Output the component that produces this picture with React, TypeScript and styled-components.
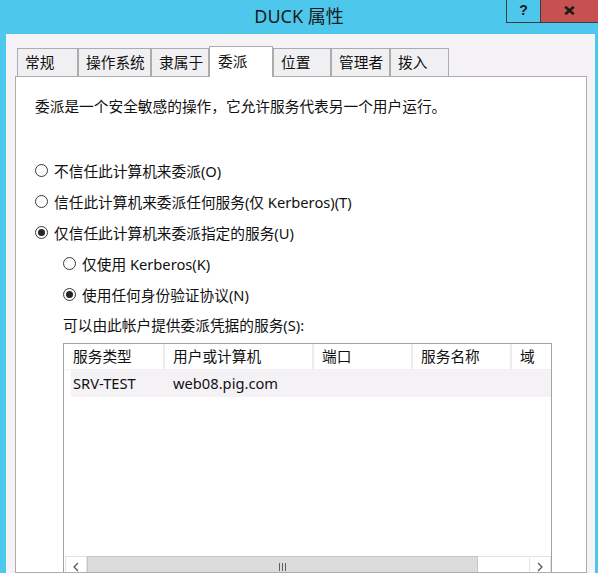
import React from "react";
import styled, { createGlobalStyle } from "styled-components";

const GlobalStyle = createGlobalStyle`
  html, body {
    margin: 0;
    padding: 0;
    overflow: hidden;
    background: #4dc7ec;
  }
  body {
    font-family: "Noto Sans", "Noto Sans CJK SC", sans-serif;
    color: #111;
  }
  * { box-sizing: border-box; }
`;

const Frame = styled.div`
  width: 598px;
  height: 573px;
  overflow: hidden;
  background: #4dc7ec;
  display: flex;
  flex-direction: column;
`;

const TitleBar = styled.div`
  height: 34px;
  flex: none;
  display: grid;
  grid-template-columns: 1fr auto 1fr;
  align-items: center;
`;

const TitleText = styled.div`
  grid-column: 2;
  font-size: 18px;
  line-height: 22px;
  color: #1b1b1b;
  padding-bottom: 2px;
  white-space: nowrap;
`;

const CaptionButtons = styled.div`
  grid-column: 3;
  justify-self: end;
  align-self: start;
  display: flex;
  height: 23px;
  border-left: 1px solid #3d3d3d;
  border-bottom: 1px solid #3d3d3d;
`;

const CaptionButton = styled.div<{ $variant: "help" | "close" }>`
  width: ${(p) => (p.$variant === "help" ? 34 : 57)}px;
  height: 100%;
  display: grid;
  place-items: center;
  background: ${(p) => (p.$variant === "help" ? "#4dc7ec" : "#c75050")};
  border-right: ${(p) => (p.$variant === "help" ? "1px solid #3d3d3d" : "none")};
  font-family: "Liberation Sans", sans-serif;
  font-weight: 700;
  font-size: 14px;
  color: #1a1a1a;
  padding-bottom: 2px;
`;

const Client = styled.div`
  flex: 1;
  min-height: 0;
  margin: 0 3px 0 6px;
  background: #f5f3f7;
  padding: 12px 8px 0 9px;
  display: flex;
  flex-direction: column;
`;

const TabStrip = styled.div`
  height: 30px;
  flex: none;
  display: flex;
  align-items: flex-end;
  padding-left: 2px;
  position: relative;
  z-index: 1;
`;

const Tab = styled.div<{ $active?: boolean; $w: number }>`
  width: ${(p) => p.$w}px;
  height: ${(p) => (p.$active ? 31 : 28)}px;
  margin-bottom: ${(p) => (p.$active ? -1 : 0)}px;
  border: 1px solid #acacac;
  border-bottom: none;
  background: ${(p) => (p.$active ? "#ffffff" : "#f0eff2")};
  padding-left: ${(p) => (p.$active ? 8 : 7)}px;
  font-size: 14.7px;
  line-height: ${(p) => (p.$active ? 28 : 26)}px;
  white-space: nowrap;
  color: #111;
`;

const Panel = styled.div`
  flex: 1;
  min-height: 0;
  background: #ffffff;
  border: 1px solid #acacac;
  padding: 19px 0 0 19px;
  display: flex;
  flex-direction: column;
  overflow: hidden;
`;

const Intro = styled.div`
  font-size: 14.7px;
  line-height: 20px;
  height: 20px;
  white-space: nowrap;
`;

const OptionList = styled.div`
  margin-top: 39px;
  display: flex;
  flex-direction: column;
`;

const OptionRow = styled.div<{ $indent?: boolean }>`
  height: 31px;
  display: flex;
  align-items: center;
  gap: 6px;
  padding-left: ${(p) => (p.$indent ? 28 : 0)}px;
  font-size: 14.7px;
  white-space: nowrap;
`;

const RadioCircle = styled.span<{ $checked?: boolean }>`
  width: 13px;
  height: 13px;
  flex: none;
  border-radius: 50%;
  border: 1px solid #3a3a3a;
  background: #fdfdfd;
  display: grid;
  place-items: center;
  &::after {
    content: "";
    width: 7px;
    height: 7px;
    border-radius: 50%;
    background: ${(p) => (p.$checked ? "#262626" : "transparent")};
  }
`;

const ListCaption = styled.div`
  height: 31px;
  line-height: 31px;
  padding-left: 28px;
  font-size: 14.7px;
  white-space: nowrap;
`;

const ListBox = styled.div`
  margin: 2px 0 0 28px;
  width: 489px;
  height: 235px;
  flex: none;
  border: 1px solid #a2a2a2;
  background: #ffffff;
  display: flex;
  flex-direction: column;
`;

const HeaderRow = styled.div`
  height: 26px;
  flex: none;
  display: flex;
  border-bottom: 1px solid #f1f1f1;
`;

const HeaderCell = styled.div<{ $w?: number }>`
  ${(p) => (p.$w ? `width: ${p.$w}px; flex: none; border-right: 2px solid #ececec;` : "flex: 1;")}
  padding-left: 8px;
  font-size: 14.7px;
  line-height: 25px;
  white-space: nowrap;
  overflow: hidden;
  &:first-child { padding-left: 9px; }
`;

const DataRow = styled.div`
  height: 27px;
  flex: none;
  margin-left: 7px;
  background: #f5f2f6;
  display: flex;
`;

const DataCell = styled.div<{ $w?: number; $pad: number }>`
  ${(p) => (p.$w ? `width: ${p.$w}px; flex: none;` : "flex: 1;")}
  padding-left: ${(p) => p.$pad}px;
  font-size: 14.7px;
  line-height: 27px;
  white-space: nowrap;
`;

const Filler = styled.div`
  flex: 1;
`;

const ScrollBar = styled.div`
  height: 21px;
  flex: none;
  display: flex;
  padding-left: 1px;
  background: #ffffff;
`;

const ScrollArrow = styled.div`
  width: 22px;
  flex: none;
  display: grid;
  place-items: center;
  border: 1px solid #e4e4e4;
  border-bottom: none;
  background: #ffffff;
`;

const Thumb = styled.div`
  width: 391px;
  flex: none;
  background: #dcdcdc;
  border: 1px solid #c6c6c6;
  border-bottom: none;
  display: flex;
  justify-content: center;
  align-items: center;
  gap: 2px;
`;

const GripLine = styled.span`
  width: 1px;
  height: 8px;
  background: #5e5e5e;
`;

const Track = styled.div`
  flex: 1;
  border-top: 1px solid #e4e4e4;
`;

const Chevron = ({ dir }: { dir: "left" | "right" }) => (
  <svg width="6" height="10" viewBox="0 0 6 10">
    <polyline
      points={dir === "left" ? "5,1 1,5 5,9" : "1,1 5,5 1,9"}
      fill="none"
      stroke="#5a5a5a"
      strokeWidth="1.3"
    />
  </svg>
);

const CloseGlyph = () => (
  <svg width="11" height="9" viewBox="0 0 11 9">
    <path d="M1.2 0.8 L9.8 8.2 M9.8 0.8 L1.2 8.2" stroke="#1a1a1a" strokeWidth="2.6" strokeLinecap="butt" />
  </svg>
);

const tabs: { label: string; w: number; active?: boolean }[] = [
  { label: "常规", w: 61 },
  { label: "操作系统", w: 73 },
  { label: "隶属于", w: 58 },
  { label: "委派", w: 64, active: true },
  { label: "位置", w: 58 },
  { label: "管理者", w: 59 },
  { label: "拨入", w: 59 },
];

const columns = [
  { label: "服务类型", w: 101 },
  { label: "用户或计算机", w: 149 },
  { label: "端口", w: 99 },
  { label: "服务名称", w: 99 },
  { label: "域" },
];

export default function App() {
  return (
    <>
      <GlobalStyle />
      <Frame>
        <TitleBar>
          <TitleText>DUCK 属性</TitleText>
          <CaptionButtons>
            <CaptionButton $variant="help">?</CaptionButton>
            <CaptionButton $variant="close">
              <CloseGlyph />
            </CaptionButton>
          </CaptionButtons>
        </TitleBar>
        <Client>
          <TabStrip>
            {tabs.map((t) => (
              <Tab key={t.label} $w={t.w} $active={t.active}>
                {t.label}
              </Tab>
            ))}
          </TabStrip>
          <Panel>
            <Intro>委派是一个安全敏感的操作，它允许服务代表另一个用户运行。</Intro>
            <OptionList>
              <OptionRow>
                <RadioCircle />
                不信任此计算机来委派(O)
              </OptionRow>
              <OptionRow>
                <RadioCircle />
                信任此计算机来委派任何服务(仅 Kerberos)(T)
              </OptionRow>
              <OptionRow>
                <RadioCircle $checked />
                仅信任此计算机来委派指定的服务(U)
              </OptionRow>
              <OptionRow $indent>
                <RadioCircle />
                仅使用 Kerberos(K)
              </OptionRow>
              <OptionRow $indent>
                <RadioCircle $checked />
                使用任何身份验证协议(N)
              </OptionRow>
              <ListCaption>可以由此帐户提供委派凭据的服务(S):</ListCaption>
            </OptionList>
            <ListBox>
              <HeaderRow>
                {columns.map((c) => (
                  <HeaderCell key={c.label} $w={c.w}>
                    {c.label}
                  </HeaderCell>
                ))}
              </HeaderRow>
              <DataRow>
                <DataCell $w={94} $pad={2}>SRV-TEST</DataCell>
                <DataCell $w={149} $pad={8}>web08.pig.com</DataCell>
                <DataCell $w={99} $pad={8} />
                <DataCell $w={99} $pad={8} />
                <DataCell $pad={8} />
              </DataRow>
              <Filler />
              <ScrollBar>
                <ScrollArrow>
                  <Chevron dir="left" />
                </ScrollArrow>
                <Thumb>
                  <GripLine />
                  <GripLine />
                  <GripLine />
                </Thumb>
                <Track />
                <ScrollArrow>
                  <Chevron dir="right" />
                </ScrollArrow>
              </ScrollBar>
            </ListBox>
          </Panel>
        </Client>
      </Frame>
    </>
  );
}
